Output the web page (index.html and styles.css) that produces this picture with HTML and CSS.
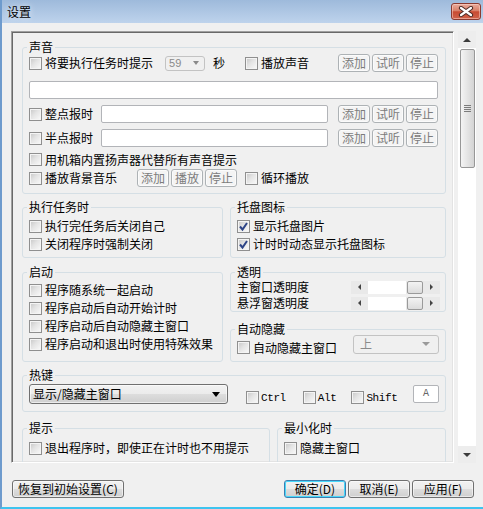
FILE: index.html
```html
<!DOCTYPE html>
<html lang="zh-CN">
<head>
    <meta charset="UTF-8">
    <meta name="viewport" content="width=device-width, initial-scale=1.0">
    <title>设置</title>
    <link rel="stylesheet" href="styles.css">
</head>
<body>

<div class="window">
    <div class="titlebar">
        <span class="title">设置</span>
        <button class="close-btn" title="关闭">
            <svg width="16" height="11" viewBox="0 0 16 11">
                <path d="M3 2 L13 9 M13 2 L3 9" stroke="#4b2b26" stroke-width="4.2" stroke-linecap="round"/>
                <path d="M3 2 L13 9 M13 2 L3 9" stroke="#ffffff" stroke-width="2.2" stroke-linecap="round"/>
            </svg>
        </button>
    </div>

    <div class="client">
        <div class="main">
            <div class="panel">

                <!-- 声音 -->
                <fieldset class="gb sound">
                    <legend>声音</legend>
                    <div class="row r1">
                        <label class="chk"><span class="box"></span>将要执行任务时提示</label>
                        <div class="combo small dis"><span>59</span><i class="tri"></i></div>
                        <span class="unit">秒</span>
                        <label class="chk gap20"><span class="box"></span>播放声音</label>
                        <div class="btns push">
                            <button class="btn-s">添加</button><button class="btn-s">试听</button><button class="btn-s">停止</button>
                        </div>
                    </div>
                    <div class="row r2">
                        <input type="text" class="text full">
                    </div>
                    <div class="row r3">
                        <label class="chk"><span class="box"></span>整点报时</label>
                        <input type="text" class="text mid">
                        <div class="btns push">
                            <button class="btn-s">添加</button><button class="btn-s">试听</button><button class="btn-s">停止</button>
                        </div>
                    </div>
                    <div class="row r3">
                        <label class="chk"><span class="box"></span>半点报时</label>
                        <input type="text" class="text mid">
                        <div class="btns push">
                            <button class="btn-s">添加</button><button class="btn-s">试听</button><button class="btn-s">停止</button>
                        </div>
                    </div>
                    <div class="row r5">
                        <label class="chk"><span class="box"></span>用机箱内置扬声器代替所有声音提示</label>
                    </div>
                    <div class="row r6">
                        <label class="chk"><span class="box"></span>播放背景音乐</label>
                        <div class="btns gap20">
                            <button class="btn-s">添加</button><button class="btn-s">播放</button><button class="btn-s">停止</button>
                        </div>
                        <label class="chk gap8"><span class="box"></span>循环播放</label>
                    </div>
                </fieldset>

                <div class="cols mid-cols">
                    <fieldset class="gb task">
                        <legend>执行任务时</legend>
                        <label class="chk line"><span class="box"></span>执行完任务后关闭自己</label>
                        <label class="chk line"><span class="box"></span>关闭程序时强制关闭</label>
                    </fieldset>
                    <fieldset class="gb task">
                        <legend>托盘图标</legend>
                        <label class="chk line"><span class="box on"><svg width="11" height="11" viewBox="0 0 11 11"><path d="M2 5.5 L4.5 8.5 L9 2" fill="none" stroke="#2d4486" stroke-width="2"/></svg></span>显示托盘图片</label>
                        <label class="chk line"><span class="box on"><svg width="11" height="11" viewBox="0 0 11 11"><path d="M2 5.5 L4.5 8.5 L9 2" fill="none" stroke="#2d4486" stroke-width="2"/></svg></span>计时时动态显示托盘图标</label>
                    </fieldset>
                </div>

                <div class="cols low-cols">
                    <fieldset class="gb startup">
                        <legend>启动</legend>
                        <label class="chk line"><span class="box"></span>程序随系统一起启动</label>
                        <label class="chk line"><span class="box"></span>程序启动后自动开始计时</label>
                        <label class="chk line"><span class="box"></span>程序启动后自动隐藏主窗口</label>
                        <label class="chk line"><span class="box"></span>程序启动和退出时使用特殊效果</label>
                    </fieldset>
                    <div class="stack">
                        <fieldset class="gb alpha">
                            <legend>透明</legend>
                            <div class="row slim">
                                <span>主窗口透明度</span>
                                <div class="hslider"><i class="arr l"></i><span class="trk"></span><span class="knob"></span><i class="arr r"></i></div>
                            </div>
                            <div class="row slim">
                                <span>悬浮窗透明度</span>
                                <div class="hslider"><i class="arr l"></i><span class="trk"></span><span class="knob"></span><i class="arr r"></i></div>
                            </div>
                        </fieldset>
                        <fieldset class="gb autohide">
                            <legend>自动隐藏</legend>
                            <div class="row hide-row">
                                <label class="chk low"><span class="box"></span>自动隐藏主窗口</label>
                                <div class="combo side dis"><span>上</span><i class="tri"></i></div>
                            </div>
                        </fieldset>
                    </div>
                </div>

                <fieldset class="gb hotkey">
                    <legend>热键</legend>
                    <div class="row key-row">
                        <div class="combo drop"><span>显示/隐藏主窗口</span><i class="tri"></i></div>
                        <label class="chk low mono ctrl"><span class="box"></span>Ctrl</label>
                        <label class="chk low mono alt"><span class="box"></span>Alt</label>
                        <label class="chk low mono shift"><span class="box"></span>Shift</label>
                        <div class="keybox">A</div>
                    </div>
                </fieldset>

                <div class="cols tail-cols">
                    <fieldset class="gb tail">
                        <legend>提示</legend>
                        <label class="chk line"><span class="box"></span>退出程序时，即使正在计时也不用提示</label>
                    </fieldset>
                    <fieldset class="gb tail">
                        <legend>最小化时</legend>
                        <label class="chk line"><span class="box"></span>隐藏主窗口</label>
                    </fieldset>
                </div>

            </div>

            <div class="vscroll">
                <div class="sb-btn up"></div>
                <div class="sb-thumb"><span class="grip"></span></div>
                <div class="sb-track"></div>
                <div class="sb-btn down"></div>
            </div>
        </div>

        <div class="footer">
            <button class="btn reset">恢复到初始设置(C)</button>
            <div class="btn-group">
                <button class="btn w default">确定(D)</button>
                <button class="btn w">取消(E)</button>
                <button class="btn w">应用(F)</button>
            </div>
        </div>
    </div>
</div>

</body>
</html>
```

FILE: styles.css
```css
/* Global */
* {
    box-sizing: border-box;
}

body {
    margin: 0;
    background-color: #ffffff;
    font-family: "Noto Sans CJK SC", "Liberation Sans", sans-serif;
    font-size: 12px;
    line-height: 14px;
    color: #000;
}

button, input {
    font: inherit;
    color: inherit;
}

/* Window frame */
.window {
    width: 483px;
    height: 509px;
    border-left: 2px solid #6e9bcd;
    border-bottom: 2px solid #3ec4ef;
    background-color: #f0f0f0;
    display: flex;
    flex-direction: column;
}

.titlebar {
    height: 23px;
    flex: none;
    display: flex;
    align-items: center;
    padding: 0 2px 0 5px;
    background: linear-gradient(#9ebadb, #bed3ec);
}

.title {
    font-size: 12px;
    text-shadow: 0 0 6px rgba(255, 255, 255, 0.8);
}

.close-btn {
    margin-left: auto;
    width: 30px;
    height: 17px;
    padding: 0;
    border: 1px solid #8b3a30;
    border-radius: 3px;
    background: linear-gradient(#e9ab9c 0%, #d98069 45%, #c84b32 52%, #d0634b 100%);
    box-shadow: inset 0 0 0 1px rgba(255, 220, 210, 0.5);
    display: flex;
    align-items: center;
    justify-content: center;
}

/* Client area */
.client {
    flex: 1;
    display: flex;
    flex-direction: column;
    padding: 8px 0 0 9px;
}

.main {
    display: flex;
    height: 432px;
}

.panel {
    width: 443px;
    height: 432px;
    overflow: hidden;
    border: 1px solid;
    border-color: #a0a0a0 #ffffff #ffffff #a0a0a0;
    box-shadow: inset 1px 1px 0 #696969, inset -1px -1px 0 #e3e3e3;
    padding: 8px 7px 0 10px;
}

/* Group boxes */
.gb {
    margin: 0;
    min-width: 0;
    padding: 0 7px 0 6px;
    border: 1px solid #d5dfe5;
    border-radius: 3px;
}

.gb legend {
    padding: 0 2px;
    margin-left: -2px;
    height: 14px;
    line-height: 14px;
}

.row {
    display: flex;
    align-items: center;
    height: 18px;
}

/* Checkboxes */
.chk {
    display: flex;
    align-items: center;
    white-space: nowrap;
    flex: none;
}

.chk.line {
    height: 18px;
}

.box {
    width: 13px;
    height: 13px;
    flex: none;
    margin-right: 3px;
    border: 1px solid #8f8f8f;
    background: linear-gradient(135deg, #c6c6c6 0%, #e4e4e4 45%, #fafafa 100%);
    box-shadow: inset 0 0 0 1px #f4f4f4;
    display: flex;
    align-items: center;
    justify-content: center;
}

.gap20 { margin-left: 20px; }
.gap8 { margin-left: 8px; }
.push { margin-left: auto; }

/* Small buttons */
.btns {
    display: flex;
    gap: 2px;
}

.btn-s {
    width: 32px;
    height: 18px;
    padding: 0;
    line-height: 16px;
    border: 1px solid #adb2b5;
    border-radius: 3px;
    background-color: #f4f4f4;
    box-shadow: inset 0 0 0 1px #fbfbfb;
    color: #7c7c7c;
}

/* Text boxes */
.text {
    height: 18px;
    padding: 0 3px;
    border: 1px solid #b2b4b8;
    border-radius: 2px;
    background-color: #fff;
    outline: none;
}

.text.full { width: 410px; }
.text.mid { width: 227px; margin-left: 8px; }

/* Combo boxes */
.combo {
    display: flex;
    align-items: center;
    flex: none;
    padding-left: 3px;
    border-radius: 3px;
}

.combo .tri {
    margin-left: auto;
    border: 4px solid transparent;
    border-top: 4px solid #8a8a8a;
    border-bottom: 0;
}

.combo.dis {
    border: 1px solid #c3c3c3;
    background-color: #f0f0f0;
    color: #8a8a8a;
}

.combo.small {
    width: 40px;
    height: 15px;
    margin-left: 12px;
    font-family: "Liberation Sans", sans-serif;
    font-size: 11px;
}

.combo.small .tri { margin-right: 5px; border-width: 4px 3px 0; }

.unit { margin-left: 8px; }

.combo.side {
    width: 86px;
    height: 19px;
    margin-left: auto;
    margin-right: -1px;
    padding-left: 6px;
}

.combo.side .tri { margin-right: 8px; border-color: #9a9a9a transparent transparent; }

.combo.drop {
    width: 199px;
    height: 20px;
    border: 1px solid #707070;
    background: linear-gradient(#f2f2f2 0%, #ebebeb 50%, #dddddd 51%, #cfcfcf 100%);
    box-shadow: inset 0 0 0 1px rgba(255, 255, 255, 0.6);
}

.combo.drop .tri { margin-right: 7px; border-top-color: #000; border-width: 5px 4px 0; }

/* Section rows */
.sound { padding-bottom: 6px; }
.r2 { margin-top: 9px; }
.r3 { margin-top: 6px; }
.r5 { margin-top: 4px; height: 17px; }
.r6 { margin-top: 1px; }

.cols {
    display: grid;
    grid-template-columns: 201px 216px;
    column-gap: 7px;
    align-items: start;
}

.mid-cols { margin-top: 6px; }
.task { padding-top: 3px; padding-bottom: 4px; }

.low-cols { margin-top: 7px; }
.startup { padding-top: 2px; padding-bottom: 8px; }

.alpha { padding-bottom: 0; }
.row.slim { height: 16px; }

.autohide { margin-top: 10px; padding-bottom: 7px; }
.hide-row { height: 20px; margin-top: -2px; }
.chk.low { margin-top: 7px; }

/* Slider (scroll style) */
.hslider {
    margin-left: auto;
    margin-right: -2px;
    width: 89px;
    height: 13px;
    display: flex;
    align-items: stretch;
    background-color: #e9e9e9;
}

.hslider .arr {
    width: 17px;
    display: flex;
    align-items: center;
    justify-content: center;
}

.hslider .arr::before {
    content: "";
    border: 3px solid transparent;
}

.hslider .arr.l::before { border-right: 3px solid #444; border-left: 0; }
.hslider .arr.r::before { border-left: 3px solid #444; border-right: 0; }

.hslider .trk {
    width: 38px;
    background-color: #ffffff;
}

.hslider .knob {
    width: 16px;
    margin-left: 1px;
    border: 1px solid #9a9a9a;
    border-radius: 2px;
    background: linear-gradient(#f3f3f3, #dcdcdc);
}

/* Hotkey */
.hotkey { margin-top: 6px; padding-top: 2px; padding-bottom: 7px; }
.key-row { height: 20px; }

.mono {
    font-family: "Liberation Mono", monospace;
    font-size: 11px;
    letter-spacing: -0.4px;
}

.mono .box { margin-right: 2px; }
.ctrl { margin-left: 18px; }
.alt { margin-left: 17px; }
.shift { margin-left: 15px; }

.keybox {
    margin-left: auto;
    margin-right: -1px;
    width: 26px;
    height: 18px;
    border: 1px solid #b2b4b8;
    border-radius: 2px;
    background-color: #fff;
    color: #666;
    font-family: "Liberation Mono", monospace;
    font-size: 10px;
    display: flex;
    align-items: center;
    justify-content: center;
}

/* Bottom groups (cut off by panel) */
.tail-cols {
    margin-top: 9px;
    grid-template-columns: 248px 169px;
}

.tail { padding-top: 4px; padding-bottom: 30px; }

/* Vertical scrollbar */
.vscroll {
    width: 18px;
    margin-left: 4px;
    display: flex;
    flex-direction: column;
    background-color: #ffffff;
}

.sb-btn {
    height: 17px;
    flex: none;
    background-color: #ededed;
    display: flex;
    align-items: center;
    justify-content: center;
}

.sb-btn::before {
    content: "";
    border: 4px solid transparent;
}

.sb-btn.up::before { border-bottom: 4px solid #3c3c3c; border-top: 0; }
.sb-btn.down::before { border-top: 4px solid #3c3c3c; border-bottom: 0; }

.sb-thumb {
    height: 119px;
    flex: none;
    margin: 1px 1px 0 2px;
    border: 1px solid #979797;
    border-radius: 2px;
    background: linear-gradient(90deg, #f4f4f4, #e4e4e4 50%, #d4d4d4);
    display: flex;
    align-items: center;
    justify-content: center;
}

.grip {
    width: 7px;
    height: 8px;
    background: repeating-linear-gradient(#7c7c7c 0 1px, transparent 1px 2px);
}

.sb-track { flex: 1; }

/* Footer buttons */
.footer {
    display: flex;
    margin-top: 17px;
    padding: 0 9px 0 1px;
}

.btn {
    height: 18px;
    padding: 0;
    line-height: 16px;
    border: 1px solid #707070;
    border-radius: 3px;
    background: linear-gradient(#f2f2f2 0%, #ebebeb 50%, #dddddd 51%, #cfcfcf 100%);
    box-shadow: inset 0 0 0 1px rgba(255, 255, 255, 0.55);
}

.btn.reset { width: 112px; }

.btn-group {
    margin-left: auto;
    display: flex;
    gap: 2px;
}

.btn.w { width: 62px; }

.btn.default {
    border-color: #3c7fb1;
    box-shadow: inset 0 0 0 1px #48d8fb;
}
```
